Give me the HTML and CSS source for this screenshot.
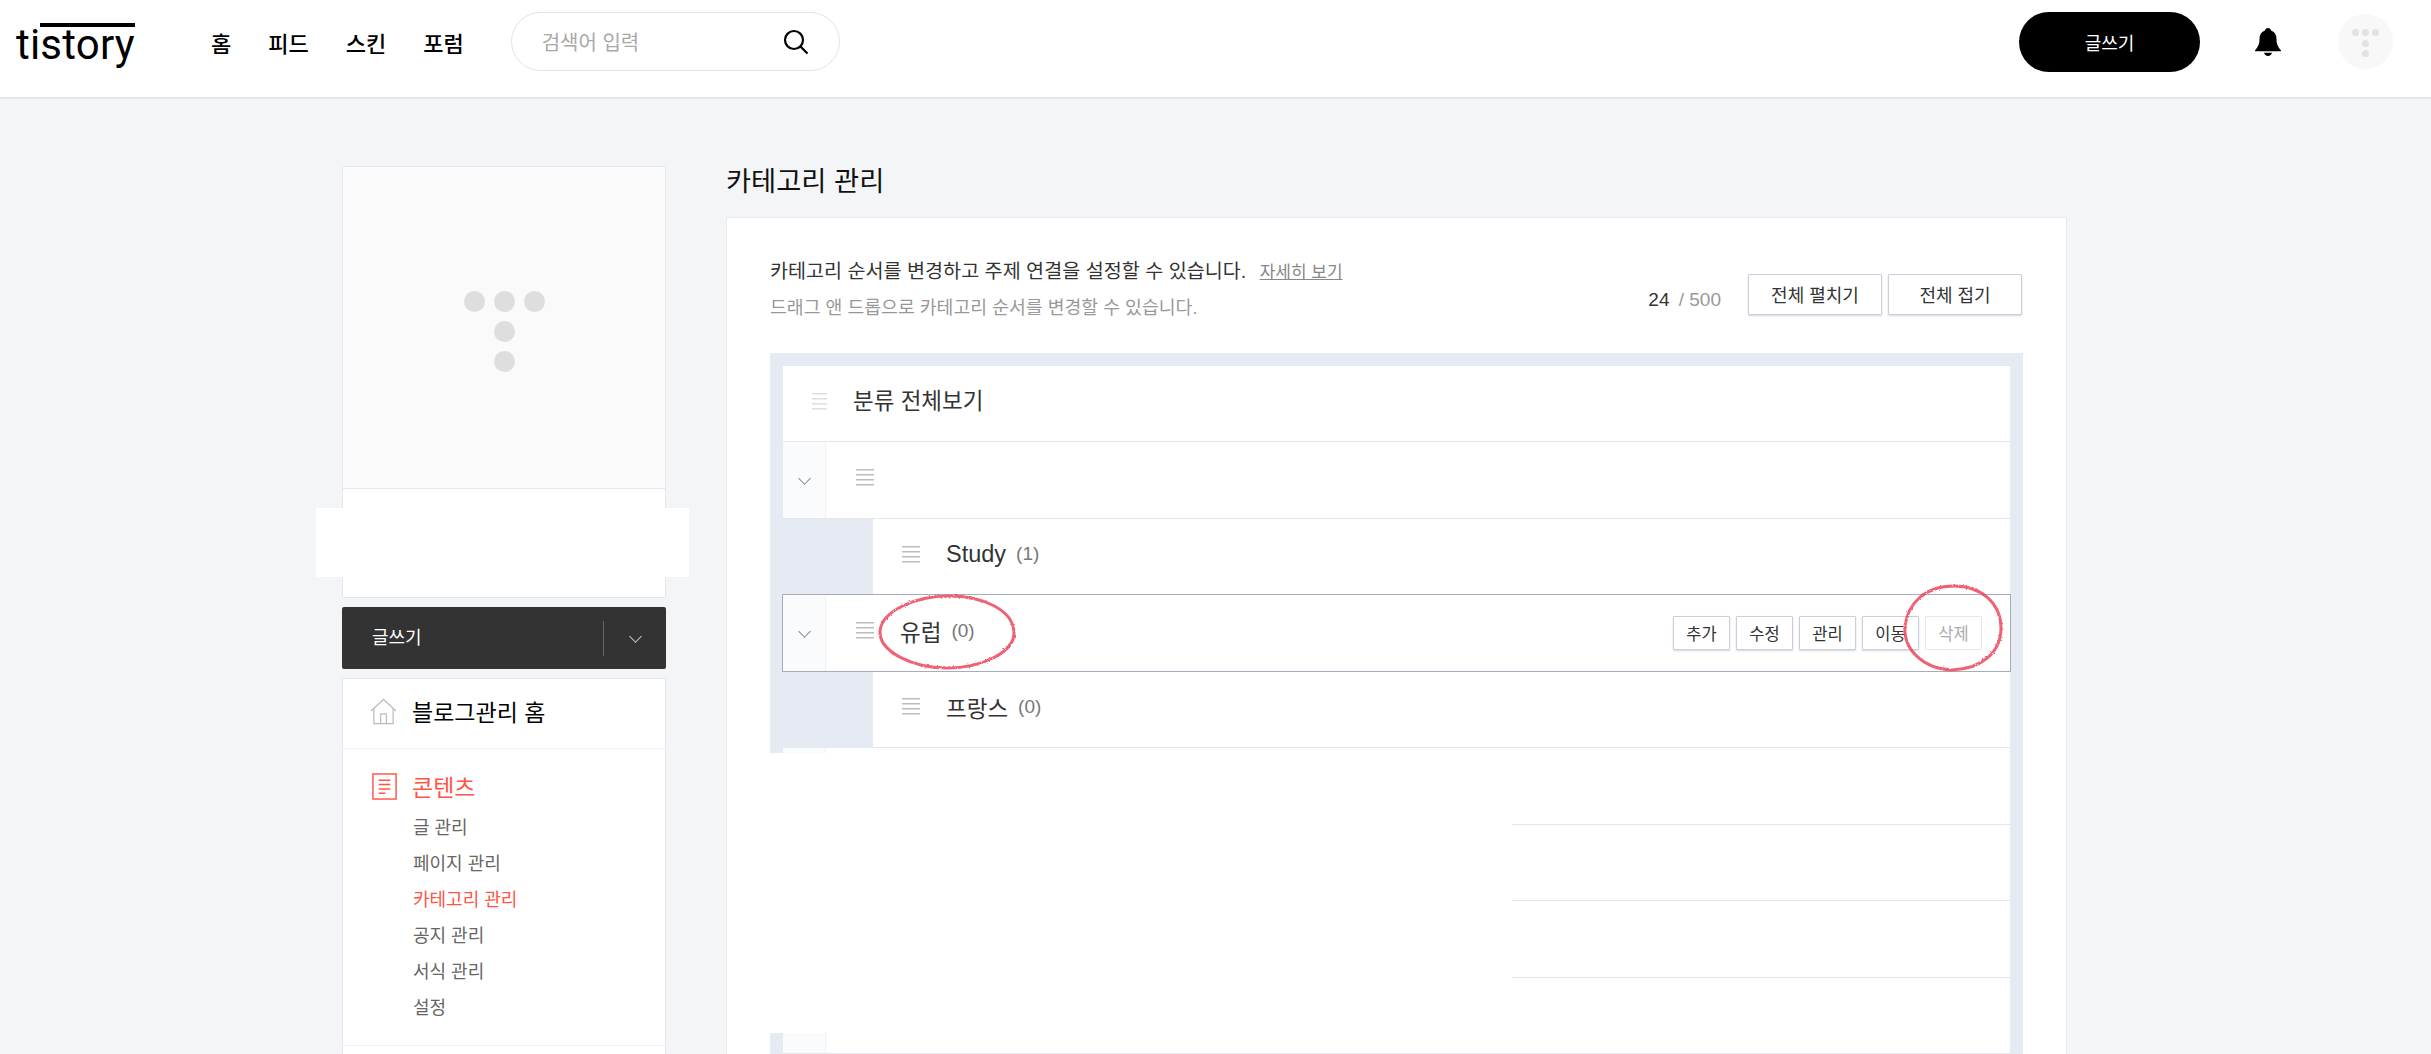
FILE: index.html
```html
<!DOCTYPE html>
<html lang="ko">
<head>
  <meta charset="UTF-8" />
  <meta name="viewport" content="width=device-width, initial-scale=1.0" />
  <title>카테고리 관리</title>
  <link rel="stylesheet" href="styles.css">
</head>
<body>
  <header class="topbar">
    <a class="logo">ti<span class="logo-bar">story</span></a>
    <nav class="topnav">
      <a>홈</a>
      <a>피드</a>
      <a>스킨</a>
      <a>포럼</a>
    </nav>
    <div class="search">
      <span class="search-text">검색어 입력</span>
      <svg class="search-icon" viewBox="0 0 26 26" fill="none" stroke="#000" stroke-width="2.2">
        <circle cx="11" cy="11" r="9"/>
        <path d="M17.5 17.5 L24.5 24.5"/>
      </svg>
    </div>
    <div class="topbar-right">
      <button class="write-btn">글쓰기</button>
      <svg class="bell" viewBox="0 0 26 28" fill="#000">
        <path d="M13 0c1.6 0 2.8 1.1 3 2.6 3.6 1.200 5.500 4.300 5.500 8.400 0 4.800 1.200 7.500 4.500 11.500v0.800H0v-0.800c3.300-4 4.500-6.700 4.500-11.500 0-4.100 1.900-7.200 5.500-8.400 0.200-1.500 1.400-2.600 3-2.600z"/>
        <path d="M9 24.800h8c-0.300 1.800-2 3.200-4 3.200s-3.700-1.400-4-3.200z"/>
      </svg>
      <div class="avatar">
        <div class="dots-row"><i></i><i></i><i></i></div>
        <i></i>
        <i></i>
      </div>
    </div>
  </header>

  <div class="page">
    <aside class="sidebar">
      <div class="blog-card">
        <div class="blog-thumb">
          <div class="dots-row"><i></i><i></i><i></i></div>
          <i></i>
          <i></i>
        </div>
        <div class="blog-info"></div>
      </div>

      <div class="side-write">
        <span class="side-write-label">글쓰기</span>
        <span class="side-write-more"><span class="chev chev-light"></span></span>
      </div>

      <div class="side-menu">
        <div class="side-home">
          <svg class="side-icon" viewBox="0 0 28 27" fill="none" stroke="#bdbdbd" stroke-width="1.3">
            <path d="M1 13 L14 1 L27 13"/>
            <path d="M4 10.500 V26 H24 V10.500"/>
            <path d="M11 26 V16 H17 V26"/>
          </svg>
          <span>블로그관리 홈</span>
        </div>
        <div class="side-group">
          <div class="side-title">
            <svg class="side-icon" viewBox="0 0 26 28" fill="none" stroke="#ff5544" stroke-width="1.500">
              <rect x="1" y="1" width="24" height="26"/>
              <path d="M7 7.500 H19 M7 12 H19 M7 16.500 H19 M7 21 H14"/>
            </svg>
            <span>콘텐츠</span>
          </div>
          <ul class="side-list">
            <li>글 관리</li>
            <li>페이지 관리</li>
            <li class="on">카테고리 관리</li>
            <li>공지 관리</li>
            <li>서식 관리</li>
            <li>설정</li>
          </ul>
        </div>
      </div>
    </aside>

    <main class="content">
      <h1 class="content-title">카테고리 관리</h1>
      <section class="panel">
        <div class="panel-top">
          <div class="panel-desc">
            <p class="desc-main">카테고리 순서를 변경하고 주제 연결을 설정할 수 있습니다. <a class="desc-link">자세히 보기</a></p>
            <p class="desc-sub">드래그 앤 드롭으로 카테고리 순서를 변경할 수 있습니다.</p>
          </div>
          <div class="panel-tools">
            <span class="count"><b>24</b> / 500</span>
            <button class="btn-wide">전체 펼치기</button>
            <button class="btn-wide">전체 접기</button>
          </div>
        </div>

        <div class="tree">
          <div class="row row-all">
            <span class="handle handle-light"></span>
            <span class="row-name">분류 전체보기</span>
          </div>
          <div class="row row-parent">
            <span class="toggle"><span class="chev"></span></span>
            <span class="handle"></span>
          </div>
          <div class="row row-child">
            <span class="handle"></span>
            <span class="row-name row-latin">Study</span>
            <span class="row-count">(1)</span>
          </div>
          <div class="row row-parent row-active">
            <span class="toggle"><span class="chev"></span></span>
            <span class="handle"></span>
            <span class="row-name">유럽</span>
            <span class="row-count">(0)</span>
            <div class="row-actions">
              <button class="btn-small">추가</button>
              <button class="btn-small">수정</button>
              <button class="btn-small">관리</button>
              <button class="btn-small">이동</button>
              <button class="btn-small off">삭제</button>
            </div>
          </div>
          <div class="row row-child">
            <span class="handle"></span>
            <span class="row-name">프랑스</span>
            <span class="row-count">(0)</span>
          </div>
          <div class="row row-parent">
            <span class="toggle"></span>
          </div>
          <div class="row row-child"></div>
          <div class="row row-child"></div>
          <div class="row row-parent">
            <span class="toggle"></span>
          </div>
        </div>
      </section>
    </main>
  </div>

  <!-- blanked out parts of the screenshot -->
  <div class="blank blank-blog"></div>
  <div class="blank blank-tree"></div>

  <!-- red pen marks -->
  <svg class="pen pen-name" viewBox="0 0 140 76" fill="none">
    <defs>
      <filter id="rough" x="-5%" y="-5%" width="110%" height="110%">
        <feTurbulence type="fractalNoise" baseFrequency="0.5" numOctaves="2" seed="3"/>
        <feDisplacementMap in="SourceGraphic" scale="2.5"/>
      </filter>
    </defs>
    <path filter="url(#rough)" d="M3 37 C5 17 38 2 72 2 C106 2 136 16 137 38 C138 58 105 74 70 74 C36 74 2 58 3 37 Z"/>
  </svg>
  <svg class="pen pen-delete" viewBox="0 0 102 88" fill="none">
    <path filter="url(#rough)" d="M3 42 C6 20 22 2 52 2 C80 2 99 20 99 44 C99 68 80 85 50 86 C22 85 1 66 3 42 Z"/>
  </svg>
</body>
</html>
```

FILE: styles.css
```css
* {
  box-sizing: border-box;
}

html, body {
  height: 100%;
  overflow: hidden;
}

body {
  margin: 0;
  position: relative;
  background: #f4f5f7;
  color: #333;
  font-family: "Liberation Sans", "Noto Sans CJK KR", sans-serif;
}

button {
  font-family: inherit;
  cursor: pointer;
}

p, h1, ul {
  margin: 0;
  padding: 0;
}

/* top bar */
.topbar {
  display: flex;
  align-items: center;
  height: 99px;
  padding: 0 0 14px 16px;
  background: #fff;
  border-bottom: 2px solid #e6e6e8;
}

.logo {
  width: 120px;
  margin-top: 7px;
  color: #000;
  font-family: "Roboto", sans-serif;
  font-size: 42px;
  font-weight: 400;
  line-height: 44px;
  letter-spacing: 0.2px;
}

.logo-bar {
  display: inline-block;
  border-top: 4px solid #000;
  line-height: 36px;
}

.topnav {
  display: flex;
  gap: 37px;
  margin-left: 75px;
}

.topnav a {
  color: #000;
  font-size: 22px;
  font-weight: 500;
}

.search {
  display: flex;
  align-items: center;
  justify-content: space-between;
  width: 329px;
  height: 59px;
  margin-left: 47px;
  padding: 0 30px;
  border: 1px solid #e3e3e3;
  border-radius: 30px;
}

.search-text {
  color: #a8a8a8;
  font-size: 20px;
}

.search-icon {
  width: 26px;
  height: 26px;
}

.topbar-right {
  display: flex;
  align-items: center;
  margin-left: auto;
  padding-right: 38px;
}

.write-btn {
  width: 181px;
  height: 60px;
  border: none;
  border-radius: 30px;
  background: #000;
  color: #fff;
  font-size: 18px;
}

.bell {
  width: 26px;
  height: 28px;
  margin-left: 55px;
}

.avatar {
  display: flex;
  flex-direction: column;
  align-items: center;
  gap: 3.500px;
  width: 55px;
  height: 55px;
  margin-left: 57px;
  padding-top: 15px;
  border-radius: 50%;
  background: #f8f8f8;
}

.avatar i, .avatar .dots-row i {
  display: block;
  width: 7px;
  height: 7px;
  border-radius: 50%;
  background: #e2e2e2;
}

.dots-row {
  display: flex;
}

.avatar .dots-row {
  gap: 3px;
}

/* page */
.page {
  display: flex;
  align-items: flex-start;
  gap: 60px;
  padding-left: 342px;
}

.sidebar {
  flex: none;
  width: 324px;
  padding-top: 67px;
}

.blog-card {
  height: 432px;
  background: #fff;
  border: 1px solid #e4e7ef;
  border-radius: 2px;
}

.blog-thumb {
  display: flex;
  flex-direction: column;
  align-items: center;
  gap: 9px;
  height: 322px;
  padding-top: 124px;
  background: #fafafb;
  border-bottom: 1px solid #e4e7ef;
}

.blog-thumb i {
  display: block;
  width: 21px;
  height: 21px;
  border-radius: 50%;
  background: #dedede;
}

.blog-thumb .dots-row {
  gap: 9px;
}

.side-write {
  display: flex;
  align-items: center;
  justify-content: space-between;
  height: 62px;
  margin-top: 9px;
  padding-left: 30px;
  background: #333;
  border-radius: 2px;
  color: #fff;
  font-size: 18px;
}

.side-write-label {
  margin-top: -4px;
}

.side-write-more {
  display: flex;
  align-items: center;
  justify-content: center;
  width: 63px;
  height: 35px;
  border-left: 1px solid #666;
}

.chev {
  display: block;
  width: 9px;
  height: 9px;
  margin-top: -4px;
  border-right: 1.500px solid #8a8a8a;
  border-bottom: 1.500px solid #8a8a8a;
  transform: rotate(45deg);
}

.chev-light {
  border-color: #ccc;
}

.side-menu {
  height: 377px;
  margin-top: 9px;
  background: #fff;
  border: 1px solid #e4e7ef;
  border-bottom: none;
}

.side-home {
  display: flex;
  align-items: center;
  gap: 15px;
  height: 70px;
  padding: 0 0 5px 27px;
  border-bottom: 1px solid #f0f1f5;
  color: #000;
  font-size: 23px;
}

.side-icon {
  flex: none;
  width: 27px;
  height: 27px;
}

.side-group {
  padding: 20px 0 19px 28px;
  border-bottom: 1px solid #f0f1f5;
}

.side-title {
  display: flex;
  align-items: center;
  gap: 14px;
  color: #ff5544;
  font-size: 23px;
}

.side-list {
  margin: 7px 0 0 42px;
  list-style: none;
  color: #666;
  font-size: 18px;
}

.side-list li {
  height: 36px;
  line-height: 36px;
}

.side-list .on {
  color: #ff5544;
}

/* main */
.content {
  flex: none;
  width: 1341px;
}

.content-title {
  height: 118px;
  padding-top: 63px;
  color: #111;
  font-size: 27.300px;
  font-weight: 400;
  line-height: 40px;
}

.panel {
  height: 838px;
  padding: 36px 43px 0;
  background: #fff;
  border: 1px solid #e8eaf0;
  border-bottom: none;
}

.panel-top {
  display: flex;
  justify-content: space-between;
  height: 99px;
}

.desc-main {
  color: #333;
  font-size: 19.600px;
  line-height: 34px;
}

.desc-link {
  margin-left: 8px;
  color: #888;
  font-size: 17px;
  text-decoration: underline;
}

.desc-sub {
  margin-top: 3px;
  color: #999;
  font-size: 18.300px;
  line-height: 30px;
}

.panel-tools {
  display: flex;
  align-items: flex-start;
  padding-top: 20px;
  transform: translateX(-1px);
}

.count {
  margin: 15px 21px 0 0;
  color: #999;
  font-size: 19px;
}

.count b {
  margin-right: 4px;
  color: #333;
  font-weight: 400;
}

.btn-wide, .btn-small {
  background: #fff;
  border: 1px solid #c9d0dc;
  border-radius: 1px;
  box-shadow: 0 1px 2px rgba(80, 95, 125, 0.25);
  color: #333;
}

.btn-wide {
  width: 134px;
  height: 41px;
  margin-left: 6px;
  padding-bottom: 3px;
  font-size: 18px;
}

.tree {
  padding: 13px 13px 0;
  background: #e6ebf3;
}

.row {
  display: flex;
  align-items: center;
  height: 76.440px;
  padding-left: 29px;
  background: #fff;
  border-bottom: 1px solid #e4e6ef;
}

.row-parent {
  padding-left: 0;
}

.row-child {
  margin-left: 90px;
}

.row-active {
  position: relative;
  margin: -1px -1px 0;
  height: 77.440px;
  border: 1px solid #a5adbd;
}

.toggle {
  display: flex;
  align-items: center;
  justify-content: center;
  flex: none;
  align-self: stretch;
  width: 43px;
  background: #fafbfd;
  border-right: 1px solid #f0f1f4;
}

.handle {
  flex: none;
  width: 18px;
  height: 17px;
  margin-top: -5px;
  background: repeating-linear-gradient(#bcbcbc 0 1px, #dedede 1px 2px, transparent 2px 5px);
}

.handle-light {
  width: 15px;
  background: repeating-linear-gradient(#dfdfdf 0 1px, #eee 1px 2px, transparent 2px 5px);
}

.row-parent .handle {
  margin-left: 30px;
}

.row-name {
  margin: -5px 0 0 26px;
  color: #333;
  font-size: 22.500px;
}

.row-latin {
  font-size: 23.500px;
}

.row-all .row-name {
  margin-top: -9px;
}

.row-count {
  margin: -5px 0 0 10px;
  color: #777;
  font-size: 19px;
}

.row-actions {
  display: flex;
  gap: 6px;
  margin-left: auto;
  padding-right: 28px;
}

.btn-small {
  width: 57px;
  height: 34px;
  padding: 0;
  font-size: 16.500px;
}

.btn-small.off {
  border-color: #e3e7ef;
  box-shadow: none;
  color: #aaa;
}

/* overlays */
.blank {
  position: absolute;
  background: #fff;
}

.blank-blog {
  left: 316px;
  top: 508px;
  width: 373px;
  height: 69px;
}

.blank-tree {
  left: 770px;
  top: 753px;
  width: 742px;
  height: 280px;
}

.pen {
  position: absolute;
}

.pen path {
  stroke: #ec3a52;
  stroke-width: 3px;
  opacity: 0.8;
}

.pen-name {
  left: 877px;
  top: 594px;
  width: 140px;
  height: 76px;
}

.pen-delete {
  left: 1902px;
  top: 584px;
  width: 102px;
  height: 88px;
}
```
